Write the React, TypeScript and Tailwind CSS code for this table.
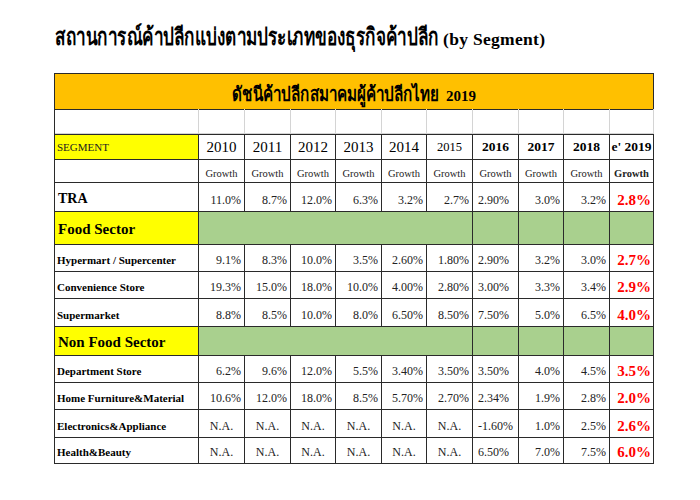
const serif = "font-['Liberation_Serif','Times_New_Roman',serif]";

const cols = "grid grid-cols-[144px_46px_46px_45px_46px_45px_46px_46px_45px_46px_44px]";

type Row = { label: string; values: string[]; h: string };

const rows: Row[] = [
  { label: "Hypermart / Supercenter", h: "h-[27px]", values: ["9.1%", "8.3%", "10.0%", "3.5%", "2.60%", "1.80%", "2.90%", "3.2%", "3.0%", "2.7%"] },
  { label: "Convenience Store", h: "h-[27px]", values: ["19.3%", "15.0%", "18.0%", "10.0%", "4.00%", "2.80%", "3.00%", "3.3%", "3.4%", "2.9%"] },
  { label: "Supermarket", h: "h-[28px]", values: ["8.8%", "8.5%", "10.0%", "8.0%", "6.50%", "8.50%", "7.50%", "5.0%", "6.5%", "4.0%"] },
];

const nonFood: Row[] = [
  { label: "Department Store", h: "h-[27px]", values: ["6.2%", "9.6%", "12.0%", "5.5%", "3.40%", "3.50%", "3.50%", "4.0%", "4.5%", "3.5%"] },
  { label: "Home Furniture&Material", h: "h-[27px]", values: ["10.6%", "12.0%", "18.0%", "8.5%", "5.70%", "2.70%", "2.34%", "1.9%", "2.8%", "2.0%"] },
  { label: "Electronics&Appliance", h: "h-[28px]", values: ["N.A.", "N.A.", "N.A.", "N.A.", "N.A.", "N.A.", "-1.60%", "1.0%", "2.5%", "2.6%"] },
  { label: "Health&Beauty", h: "h-[26px]", values: ["N.A.", "N.A.", "N.A.", "N.A.", "N.A.", "N.A.", "6.50%", "7.0%", "7.5%", "6.0%"] },
];

const cell = "border-r border-b border-[#2a2a2a] flex items-end";

function ValueCell({ v, i }: { v: string; i: number }) {
  if (i === 9) {
    return <div className={`${cell} justify-end pr-[2px] pb-0 text-[15px] font-bold text-[#ff0000]`}>{v}</div>;
  }
  if (v === "N.A.") {
    return <div className={`${cell} justify-center pb-[2px] text-[12px] text-[#222]`}>{v}</div>;
  }
  if (i === 6) {
    return <div className={`${cell} justify-start pl-[5px] pb-[2px] text-[12px] text-[#222]`}>{v}</div>;
  }
  return <div className={`${cell} justify-end pr-[3px] pb-[2px] text-[12px] text-[#222]`}>{v}</div>;
}

function DataRow({ row }: { row: Row }) {
  return (
    <div className={`${cols} ${row.h}`}>
      <div className={`${cell} pl-[2px] pb-[3px] text-[11px] font-bold text-black`}>{row.label}</div>
      {row.values.map((v, i) => (
        <ValueCell key={i} v={v} i={i} />
      ))}
    </div>
  );
}

function SectorRow({ label, h }: { label: string; h: string }) {
  return (
    <div className={`${cols} ${h}`}>
      <div className="border-r border-b border-[#2a2a2a] bg-[#ffff00] flex items-center pt-[3px] pl-[3px] text-[15px] font-bold text-black">
        {label}
      </div>
      <div className="col-span-6 border-r border-b border-[#2a2a2a] bg-[#a9d08e]" />
      <div className="border-r border-b border-[#2a2a2a] bg-[#a9d08e]" />
      <div className="border-r border-b border-[#2a2a2a] bg-[#a9d08e]" />
      <div className="border-r border-b border-[#2a2a2a] bg-[#a9d08e]" />
      <div className="border-r border-b border-[#2a2a2a] bg-[#a9d08e]" />
    </div>
  );
}

const years = [
  { y: "2010", c: "text-[15px]" },
  { y: "2011", c: "text-[15px]" },
  { y: "2012", c: "text-[15px]" },
  { y: "2013", c: "text-[15px]" },
  { y: "2014", c: "text-[15px]" },
  { y: "2015", c: "text-[12.5px]" },
  { y: "2016", c: "text-[13.5px] font-bold" },
  { y: "2017", c: "text-[13.5px] font-bold" },
  { y: "2018", c: "text-[13.5px] font-bold" },
  { y: "e' 2019", c: "text-[13.5px] font-bold" },
];

export default function App() {
  return (
    <div className={`w-[700px] h-[500px] bg-white ${serif} text-black`}>
      <div className="pl-[55px] pt-[22px] h-[73px]">
        <h1 className="flex items-baseline whitespace-nowrap font-bold text-black">
          <span className="w-[388px] leading-[30px]">
            <span className="inline-block origin-left scale-x-[0.715] text-[24px]">
              สถานการณ์ค้าปลีกแบ่งตามประเภทของธุรกิจค้าปลีก
            </span>
          </span>
          <span className="text-[17.5px] tracking-[0.3px]">(by Segment)</span>
        </h1>
      </div>

      <div className="ml-[54px] w-[600px] border-l border-[#2a2a2a]">
        <div className={`${cols} h-[36px]`}>
          <div className="col-span-11 border-t border-r border-b border-[#2a2a2a] bg-[#ffc000] flex items-baseline justify-center pt-[5px] font-bold whitespace-nowrap">
            <span className="w-[214px]">
              <span className="inline-block origin-left scale-x-[0.76] text-[20px]">
                ดัชนีค้าปลีกสมาคมผู้ค้าปลีกไทย
              </span>
            </span>
            <span className="text-[15px]">2019</span>
          </div>
        </div>

        <div className={`${cols} h-[25px]`}>
          <div className="border-r border-b border-[#d4d4d4]" />
          {years.map((y) => (
            <div key={y.y} className="border-r border-b border-[#d4d4d4]" />
          ))}
        </div>

        <div className={`${cols} h-[24px]`}>
          <div className="border-r border-b border-t border-[#2a2a2a] bg-[#ffff00] flex items-center pl-[2px] pt-[1px] text-[11px] text-[#222]">
            SEGMENT
          </div>
          {years.map((y) => (
            <div key={y.y} className={`border-r border-b border-t border-[#2a2a2a] flex items-center justify-center pt-[1px] ${y.c}`}>
              {y.y}
            </div>
          ))}
        </div>

        <div className={`${cols} h-[25px]`}>
          <div className={cell} />
          {years.map((y, i) => (
            <div key={y.y} className={`${cell} justify-center pb-0 text-[10.5px] ${i === 9 ? "font-bold" : ""} text-[#222]`}>
              Growth
            </div>
          ))}
        </div>

        <div className={`${cols} h-[29px]`}>
          <div className={`${cell} pl-[3px] pb-[2px] text-[14px] font-bold text-black`}>TRA</div>
          {["11.0%", "8.7%", "12.0%", "6.3%", "3.2%", "2.7%", "2.90%", "3.0%", "3.2%", "2.8%"].map((v, i) => (
            <ValueCell key={i} v={v} i={i} />
          ))}
        </div>

        <SectorRow label="Food Sector" h="h-[33px]" />
        {rows.map((r) => (
          <DataRow key={r.label} row={r} />
        ))}
        <SectorRow label="Non Food Sector" h="h-[29px]" />
        {nonFood.map((r) => (
          <DataRow key={r.label} row={r} />
        ))}
      </div>
    </div>
  );
}
